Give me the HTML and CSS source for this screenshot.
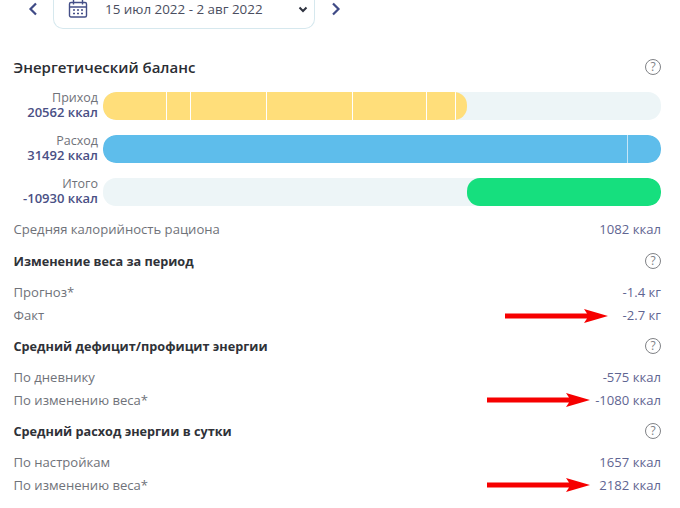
FILE: index.html
```html
<!DOCTYPE html>
<html lang="ru">
<head>
  <meta charset="UTF-8">
  <title>Энергетический баланс</title>
  <link rel="stylesheet" href="styles.css">
</head>
<body>
  <!-- Date picker -->
  <div class="date-row">
    <svg class="nav-arrow" width="10" height="14" viewBox="0 0 10 14"><path d="M8 1.500 2.500 7 8 12.500"/></svg>
    <div class="date-box">
      <svg class="calendar" width="20" height="19" viewBox="0 0 20 19">
        <rect x="1.500" y="2.500" width="17" height="14.500" rx="1.500"/>
        <path d="M1.500 7h17M5.500 0v4.500M14.500 0v4.500"/>
        <path class="dots" d="M5 10h2M9 10h2M13 10h2M5 13.500h2M9 13.500h2M13 13.500h2"/>
      </svg>
      <span class="date-text">15 июл 2022 - 2 авг 2022</span>
      <svg class="caret" width="10" height="7" viewBox="0 0 10 7"><path d="M1.500 1.500 5 5l3.500-3.500"/></svg>
    </div>
    <svg class="nav-arrow" width="10" height="14" viewBox="0 0 10 14"><path d="M2 1.500 7.500 7 2 12.500"/></svg>
  </div>

  <div class="content">
    <div class="title-row">
      <h1>Энергетический баланс</h1>
      <span class="help">?</span>
    </div>

    <!-- Bars -->
    <div class="bars">
      <div class="bar-row">
        <div class="bar-label">Приход<b>20562 ккал</b></div>
        <div class="track">
          <div class="fill yellow" style="width: 65.2%">
            <i style="width: 63.500px"></i><i style="width: 24px"></i><i style="width: 76px"></i><i style="width: 86px"></i><i style="width: 74px"></i><i style="width: 29px"></i>
          </div>
        </div>
      </div>
      <div class="bar-row">
        <div class="bar-label">Расход<b>31492 ккал</b></div>
        <div class="track">
          <div class="fill blue" style="width: 100%">
            <i style="width: 525px"></i>
          </div>
        </div>
      </div>
      <div class="bar-row">
        <div class="bar-label">Итого<b>-10930 ккал</b></div>
        <div class="track track-end">
          <div class="fill green" style="width: 34.8%"></div>
        </div>
      </div>
    </div>

    <div class="row first-row"><span>Средняя калорийность рациона</span><span class="value">1082 ккал</span></div>

    <div class="section-head"><h2>Изменение веса за период</h2><span class="help">?</span></div>
    <div class="row"><span>Прогноз*</span><span class="value">-1.4 кг</span></div>
    <div class="row"><span>Факт</span><svg class="red-arrow arrow-near" width="103" height="14" viewBox="0 0 103 14"><path d="M0 4.500h82L79 0l24 7-24 7 3-4.500H0z"/></svg><span class="value">-2.7 кг</span></div>

    <div class="section-head"><h2>Средний дефицит/профицит энергии</h2><span class="help">?</span></div>
    <div class="row"><span>По дневнику</span><span class="value">-575 ккал</span></div>
    <div class="row"><span>По изменению веса*</span><svg class="red-arrow arrow-far" width="103" height="14" viewBox="0 0 103 14"><path d="M0 4.500h82L79 0l24 7-24 7 3-4.500H0z"/></svg><span class="value">-1080 ккал</span></div>

    <div class="section-head"><h2>Средний расход энергии в сутки</h2><span class="help">?</span></div>
    <div class="row"><span>По настройкам</span><span class="value">1657 ккал</span></div>
    <div class="row"><span>По изменению веса*</span><svg class="red-arrow arrow-far" width="103" height="14" viewBox="0 0 103 14"><path d="M0 4.500h82L79 0l24 7-24 7 3-4.500H0z"/></svg><span class="value">2182 ккал</span></div>
  </div>
</body>
</html>
```

FILE: styles.css
```css
* {
  margin: 0;
  padding: 0;
  box-sizing: border-box;
}
body {
  font-family: "Open Sans", "Noto Sans", sans-serif;
  background-color: #fff;
  color: #6f7279;
  font-size: 13.100px;
  width: 680px;
  height: 508px;
  overflow: hidden;
}
/* Date picker */
.date-row {
  display: flex;
  align-items: flex-start;
  height: 29px;
  padding-left: 28px;
}
.nav-arrow {
  margin-top: 2px;
  fill: none;
  stroke: #3f4a86;
  stroke-width: 2.200;
}
.date-box {
  display: flex;
  align-items: flex-start;
  width: 262px;
  height: 29px;
  margin: 0 16px 0 15px;
  padding: 0 5px 0 14px;
  border: 1.500px solid #d6e8ee;
  border-top: none;
  border-radius: 0 0 10px 10px;
}
.calendar {
  flex: none;
  fill: none;
  stroke: #444f88;
  stroke-width: 1.400;
}
.calendar .dots {
  stroke-width: 1.500;
}
.date-text {
  flex: 1;
  margin-left: 17px;
  color: #4a4e60;
  font-size: 13.400px;
  line-height: 18px;
}
.caret {
  margin-top: 6px;
  margin-right: 1px;
  fill: none;
  stroke: #2f3340;
  stroke-width: 2;
}
.content {
  padding: 0 19px 0 13.500px;
}
.title-row {
  display: flex;
  justify-content: space-between;
  align-items: center;
  height: 22px;
  margin-top: 26.500px;
}
h1 {
  font-size: 15px;
  font-weight: 600;
  color: #2a2d33;
}
h2 {
  font-size: 12.700px;
  font-weight: 700;
  color: #2f3238;
}
.help {
  flex: none;
  width: 16px;
  height: 16px;
  border: 1.500px solid #808286;
  border-radius: 50%;
  color: #808286;
  font-size: 12px;
  line-height: 13px;
  text-align: center;
}
/* Bars */
.bars {
  display: flex;
  flex-direction: column;
  gap: 15px;
  margin-top: 14.500px;
}
.bar-row {
  display: flex;
  gap: 5px;
  height: 28px;
}
.bar-label {
  width: 84.500px;
  margin-top: -1px;
  font-size: 12.500px;
  line-height: 14px;
  text-align: right;
  white-space: nowrap;
}
.bar-label b {
  display: block;
  font-size: 13px;
  font-weight: 600;
  color: #4a5085;
}
.track {
  display: flex;
  flex: 1;
  background-color: #edf5f7;
  border-radius: 13px;
  overflow: hidden;
}
.track-end {
  justify-content: flex-end;
}
.fill {
  display: flex;
  height: 100%;
  border-radius: 13px;
  overflow: hidden;
}
.fill i {
  flex: none;
  height: 100%;
  border-right: 1.500px solid #fff;
}
.yellow {
  background-color: #ffde7a;
}
.blue {
  background-color: #5ebdeb;
}
.blue i {
  border-right-color: #c6e6f7;
}
.green {
  background-color: #16df7e;
}
/* Rows */
.first-row {
  margin-top: 12px;
  margin-bottom: 10.400px;
}
.row {
  position: relative;
  display: flex;
  justify-content: space-between;
  align-items: center;
  height: 22px;
}
.row + .row {
  margin-top: 0.600px;
}
.value {
  color: #5f6592;
}
.section-head {
  display: flex;
  justify-content: space-between;
  align-items: center;
  height: 22px;
  margin-top: 9.400px;
  margin-bottom: 9px;
}
.red-arrow {
  position: absolute;
  fill: #f60000;
}
.arrow-near {
  top: 5px;
  right: 53px;
}
.arrow-far {
  top: 4px;
  right: 71px;
}
```
